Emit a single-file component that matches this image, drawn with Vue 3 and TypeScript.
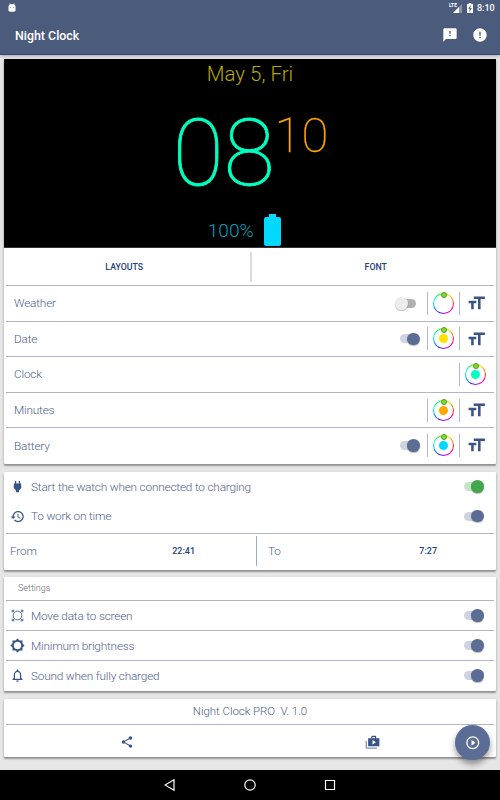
<script setup lang="ts">
interface Row { label: string; toggle?: boolean; color: string; font: boolean }
interface Option { label: string; icon: string }

const rows: Row[] = [
  { label: 'Weather', toggle: false, color: 'transparent', font: true },
  { label: 'Date', toggle: true, color: '#ffe100', font: true },
  { label: 'Clock', color: '#00ffc0', font: false },
  { label: 'Minutes', color: '#ffa800', font: true },
  { label: 'Battery', toggle: true, color: '#00d8ff', font: true },
]

const icons = {
  feedback: 'M20 2H4c-1.1 0-2 .9-2 2v18l4-4h14c1.100 0 2-.9 2-2V4c0-1.100-.9-2-2-2zm-7 12h-2v-2h2v2zm0-4h-2V6h2v4z',
  error: 'M12 2C6.480 2 2 6.480 2 12s4.480 10 10 10 10-4.480 10-10S17.520 2 12 2zm1 15h-2v-2h2v2zm0-4h-2V7h2v6z',
  size: 'M9 4v3h5v12h3V7h5V4H9zm-6 8h3v7h3v-7h3V9H3v3z',
  plug: 'M16.010 7L16 3h-2v4h-4V3H8v4h-.010C7 6.990 6 7.990 6 8.990v5.490L9.500 18v3h5v-3l3.500-3.510v-5.500c0-1-1-2-1.990-1.990z',
  history: 'M13 3c-4.970 0-9 4.030-9 9H1l3.890 3.890.070.140L9 12H6c0-3.870 3.130-7 7-7s7 3.130 7 7-3.130 7-7 7c-1.930 0-3.680-.790-4.940-2.060l-1.420 1.420C8.270 19.990 10.510 21 13 21c4.970 0 9-4.030 9-9s-4.030-9-9-9zm-1 5v5l4.280 2.540.720-1.210-3.500-2.080V8H12z',
  brightness: 'M20 15.310L23.310 12 20 8.690V4h-4.690L12 .690 8.690 4H4v4.690L.690 12 4 15.310V20h4.690L12 23.310 15.310 20H20v-4.690zM12 18c-3.310 0-6-2.690-6-6s2.690-6 6-6 6 2.690 6 6-2.690 6-6 6z',
  bell: 'M12 22c1.100 0 2-.9 2-2h-4c0 1.100.9 2 2 2zm6-6v-5c0-3.070-1.630-5.640-4.500-6.320V4c0-.830-.670-1.500-1.500-1.500s-1.500.670-1.500 1.500v.680C7.640 5.360 6 7.920 6 11v5l-2 2v1h16v-1l-2-2zm-2 1H8v-6c0-2.480 1.510-4.500 4-4.500s4 2.020 4 4.500v6z',
  share: 'M18 16.080c-.760 0-1.440.3-1.960.770L8.910 12.700c.050-.230.090-.460.090-.7s-.040-.470-.090-.7l7.050-4.110c.540.5 1.250.810 2.040.810 1.660 0 3-1.340 3-3s-1.340-3-3-3-3 1.340-3 3c0 .240.040.470.090.7L8.040 9.810C7.500 9.310 6.790 9 6 9c-1.660 0-3 1.340-3 3s1.340 3 3 3c.790 0 1.500-.310 2.040-.810l7.120 4.160c-.050.210-.080.430-.080.650 0 1.610 1.310 2.920 2.920 2.920s2.920-1.310 2.920-2.920-1.310-2.920-2.920-2.920z',
  play: 'M10 16.500l6-4.500-6-4.500v9zM12 2C6.480 2 2 6.480 2 12s4.480 10 10 10 10-4.480 10-10S17.520 2 12 2zm0 18c-4.410 0-8-3.590-8-8s3.590-8 8-8 8 3.590 8 8-3.590 8-8 8z',
}

const options: Option[] = [
  { label: 'Move data to screen', icon: 'move' },
  { label: 'Minimum brightness', icon: 'brightness' },
  { label: 'Sound when fully charged', icon: 'bell' },
]
</script>

<template>
  <div class="screen">
    <header>
      <div class="status">
        <svg class="droid" viewBox="0 0 8 9"><path d="M1.600.2l1 1.500M6.400.2l-1 1.500" stroke="#fff" stroke-width=".6" /><path d="M1.800 1.200h4.400L7.500 3v4.300L6.300 8.700H1.700L.5 7.300V3z" fill="#fff" /><circle cx="2.700" cy="4.300" r=".5" fill="#4b5b7c" /><circle cx="5.300" cy="4.300" r=".5" fill="#4b5b7c" /></svg>
        <span class="lte">LTE</span>
        <svg class="signal" viewBox="0 0 9 9"><path d="M9 0v9H0z" fill="#8993a9" /><path d="M6 3v6H0z" fill="#fff" /></svg>
        <svg class="charge" viewBox="0 0 6 10"><path d="M1.800 0h2.400v1H6v9H0V1h1.800z" fill="#fff" /><path d="M3.600 2L1.200 5.800h1.500L2.400 9l2.400-4H3.300z" fill="#4b5b7c" /></svg>
        <span class="time">8:10</span>
      </div>
      <div class="bar">
        <h1>Night Clock</h1>
        <svg class="ic16 fb" viewBox="0 0 24 24"><path :d="icons.feedback" /></svg>
        <svg class="ic16" viewBox="0 0 24 24"><path :d="icons.error" /></svg>
      </div>
    </header>

    <main>
      <section class="card first">
        <div class="face">
          <div class="date">May 5, Fri</div>
          <div class="clock"><span class="hours">08</span><span class="mins">10</span></div>
          <div class="power">
            <span>100%</span>
            <svg viewBox="0 0 17 32"><path d="M5 0h7v3h3q2 0 2 2v25q0 2-2 2H2q-2 0-2-2V5q0-2 2-2h3z" fill="#00d8ff" /></svg>
          </div>
        </div>
        <div class="tabs"><b>LAYOUTS</b><i></i><b>FONT</b></div>
        <div v-for="r in rows" :key="r.label" class="row">
          <span class="label">{{ r.label }}</span>
          <span v-if="r.toggle !== undefined" class="switch" :class="{ off: !r.toggle }"></span>
          <span class="cell"><span class="ring"><span class="hole"><span class="dot" :style="{ background: r.color }"></span></span></span></span>
          <span v-if="r.font" class="cell"><svg class="size" viewBox="0 0 24 24"><path :d="icons.size" /></svg></span>
        </div>
      </section>

      <section class="card second">
        <div class="option charging"><svg class="ic plug" viewBox="0 0 24 24"><path :d="icons.plug" /></svg><span>Start the watch when connected to charging</span><span class="switch green"></span></div>
        <div class="option work"><svg class="ic" viewBox="0 0 24 24"><path :d="icons.history" /></svg><span>To work on time</span><span class="switch"></span></div>
        <div class="range">
          <div class="from"><span>From</span><b>22:41</b></div>
          <div class="to"><span>To</span><b>7:27</b></div>
        </div>
      </section>

      <section class="card third">
        <div class="caption">Settings</div>
        <div v-for="o in options" :key="o.label" class="option lined">
          <svg v-if="o.icon === 'move'" class="ic thin" viewBox="0 0 24 24"><circle cx="12" cy="12" r="7" /><path d="M3.500 7V3.500H7M3.500 3.500l3.500 3.500M17 3.500h3.500V7M20.500 3.500L17 7M3.500 17v3.500H7M3.500 20.500L7 17M20.500 17v3.500H17M20.500 20.500L17 17" /></svg>
          <svg v-else class="ic" :class="o.icon" viewBox="0 0 24 24"><path :d="o.icon === 'bell' ? icons.bell : icons.brightness" /></svg>
          <span>{{ o.label }}</span><span class="switch"></span>
        </div>
      </section>

      <section class="card fourth">
        <div class="version">Night Clock PRO&nbsp; V. 1.0</div>
        <div class="links">
          <svg class="share" viewBox="0 0 24 24"><path :d="icons.share" /></svg>
          <svg class="shop" viewBox="0 0 24 24"><path d="M3 9H1v11c0 1.110.890 2 2 2h16v-2H3V9z" opacity=".65" /><path d="M18 5V3c0-1.110-.890-2-2-2h-4c-1.110 0-2 .890-2 2v2H5v13h18V5h-5zm-6-2h4v2h-4V3zm0 12V8l5.500 3.500L12 15z" /></svg>
        </div>
      </section>
    </main>

    <nav>
      <svg viewBox="0 0 12 12"><path d="M10 .8v10.400L1 6z" /></svg>
      <svg viewBox="0 0 12 12"><circle cx="6" cy="6" r="5.200" /></svg>
      <svg viewBox="0 0 12 12"><path d="M1.500 1.500h9v9h-9z" /></svg>
    </nav>
    <button class="fab"><svg viewBox="0 0 24 24"><path :d="icons.play" /></svg></button>
  </div>
</template>

<style>
body { margin: 0; }
</style>

<style scoped>
* { box-sizing: border-box; }
.screen { position: relative; width: 500px; height: 800px; display: flex; flex-direction: column; background: #e6e6e6; font-family: Roboto, "Liberation Sans", sans-serif; color: #50628d; overflow: hidden; }
svg { display: block; flex: none; fill: #3b5488; }
header { height: 55px; flex: none; background: #4b5b7c; border-bottom: 1px solid #2f4676; color: #fff; box-shadow: 0 1px 3px #0004; }
.status { height: 16px; display: flex; align-items: center; padding: 0 5px 0 8px; }
.droid { width: 8px; height: 9px; margin-right: auto; margin-top: -2px; }
.lte { font-size: 5px; line-height: 5px; font-weight: 700; margin: -5px -4px 0 0; z-index: 1; }
.signal { width: 9px; height: 9px; }
.charge { width: 6px; height: 10px; margin: 0 4px 0 5px; }
.time { font-size: 9px; line-height: 16px; font-weight: 500; width: 18px; white-space: nowrap; }
.bar { height: 38px; display: flex; align-items: center; padding: 0 12px 0 15px; }
h1 { margin: 1px auto 0 0; font-size: 12.4px; font-weight: 500; line-height: 20px; }
.ic16 { width: 16px; height: 16px; fill: #fff; }
.fb { margin-right: 14px; }
main { flex: 1; padding: 4px 4px 0; }
.card { background: #fff; box-shadow: 0 2px 1.5px #0004, 0 1px 3px #0003; border-radius: 1px; }
.first { height: 405px; margin-bottom: 8px; }
.face { height: 189px; background: #000; display: flex; flex-direction: column; align-items: center; border-bottom: 1px solid #333; }
.date { height: 30px; line-height: 30px; font-size: 20.5px; font-weight: 300; color: #b8a800; }
.clock { height: 124px; display: flex; align-items: flex-start; padding-left: 1px; }
.hours { font-size: 93px; line-height: 94px; margin-top: 18px; font-weight: 100; color: #00ffc0; -webkit-text-stroke: .8px #00ffc0; }
.mins { font-size: 49px; line-height: 49px; margin: 22px 0 0; font-weight: 100; color: #ffa800; -webkit-text-stroke: .3px #ffa800; }
.power { display: flex; gap: 10.5px; align-items: center; color: #00a0bd; font-size: 19.2px; font-weight: 300; height: 34px; margin-right: 11px; }
.power svg { width: 17px; height: 32px; }
.tabs { height: 37px; display: flex; align-items: center; justify-content: center; }
.tabs b { flex: 1; text-align: center; font-size: 8.8px; font-weight: 500; color: #24427d; margin-top: 1px; }
.tabs b:first-child { padding-right: 5px; }
.tabs b:last-child { padding-left: 4px; }
.tabs i { width: 2px; height: 30px; background: #d9dce6; margin-top: 1px; }
.row { height: 35.6px; margin: 0 2px; border-top: 1px solid #b1b5c6; display: flex; align-items: center; padding: 0 3px 0 8px; }
.label, .option > span:nth-child(2), .range span { font-size: 11.8px; font-weight: 300; letter-spacing: -.19px; }
.label { margin-right: auto; }
.cell { width: 32px; height: 23px; border-left: 1px solid #b1b5c6; display: flex; align-items: center; justify-content: center; }
.ring { width: 21px; height: 21px; padding: 1px; border-radius: 50%; position: relative; background: conic-gradient(#58f000, #f5e600 35deg, #ff3010 85deg, #ff00a0 130deg, #c000ff 170deg, #3020ff 205deg, #00b0ff 250deg, #00ffd0 285deg, #00ff40 325deg, #58f000); }
.ring::before { content: ""; position: absolute; z-index: 1; width: 4px; height: 4px; top: -1px; left: 8px; border-radius: 50%; background: #80e020; border: .5px solid #569333; }
.hole { width: 19px; height: 19px; border-radius: 50%; background: #fff; display: grid; place-items: center; }
.dot { width: 9px; height: 9px; border-radius: 50%; }
.size { width: 20.6px; height: 20.6px; margin-left: 1px; }
.switch { position: relative; width: 20px; height: 13px; display: block; flex: none; margin-right: 7px; }
.switch::before { content: ""; position: absolute; left: 0; top: 2px; width: 18px; height: 9px; border-radius: 5px; background: #ced3df; }
.switch::after { content: ""; position: absolute; right: 0; top: .2px; width: 12.6px; height: 12.6px; border-radius: 50%; background: #5b6d95; box-shadow: 0 1px 1px #0004; }
.switch.off { margin-right: 11px; }
.switch.off::before { left: 2px; background: #b1b1b1; }
.switch.off::after { right: auto; left: -1px; background: #ececec; }
.switch.green::before { background: #c3e5c5; }
.switch.green::after { background: #43a64d; }
.second { height: 98px; margin-bottom: 7px; }
.option { display: flex; align-items: center; padding: 0 3px 0 4px; margin: 0 2px; height: 30px; }
.option > span:nth-child(2) { margin: 0 auto 0 6px; }
.ic { width: 15px; height: 15px; }
.thin { fill: none; stroke: #3b5488; stroke-width: 1.4; }
.charging { height: 29px; }
.work { height: 32px; padding-bottom: 2px; }
.range { margin: 0 2px; border-top: 1px solid #b1b5c6; height: 37px; display: flex; padding-top: 2px; }
.range > div { height: 30px; display: flex; align-items: center; justify-content: space-between; }
.range b { font-size: 9px; font-weight: 500; color: #24427d; }
.from { width: 250px; padding: 0 61px 0 4px; }
.to { flex: 1; border-left: 1px solid #9dabc4; padding: 0 57px 0 11px; }
.third { height: 114px; margin-bottom: 8px; }
.caption { height: 23px; line-height: 23px; padding-left: 14px; font-size: 9px; font-weight: 300; color: #666; }
.lined { border-top: 1px solid #b1b5c6; }
.fourth { height: 58px; }
.version { height: 26px; line-height: 25px; text-align: center; font-size: 11.5px; letter-spacing: -.05px; font-weight: 300; margin: 0 2px; border-bottom: 1px solid #b1b5c6; }
.links { display: flex; height: 34px; align-items: center; }
.share { width: 14px; height: 14px; margin-left: 116px; }
.shop { width: 15px; height: 15px; margin-left: 231px; }
nav { height: 30px; background: #000; display: flex; align-items: center; justify-content: center; gap: 68px; }
nav svg { width: 12px; height: 12px; fill: none; stroke: #fff; stroke-width: 1.2; }
.fab { position: absolute; left: 455px; top: 725px; width: 35px; height: 35px; border: 0; padding: 0; border-radius: 50%; background: #5b6d95; display: grid; place-items: center; box-shadow: 0 4px 6px #0006; }
.fab svg { width: 15.6px; height: 15.6px; fill: #fff; }
</style>
